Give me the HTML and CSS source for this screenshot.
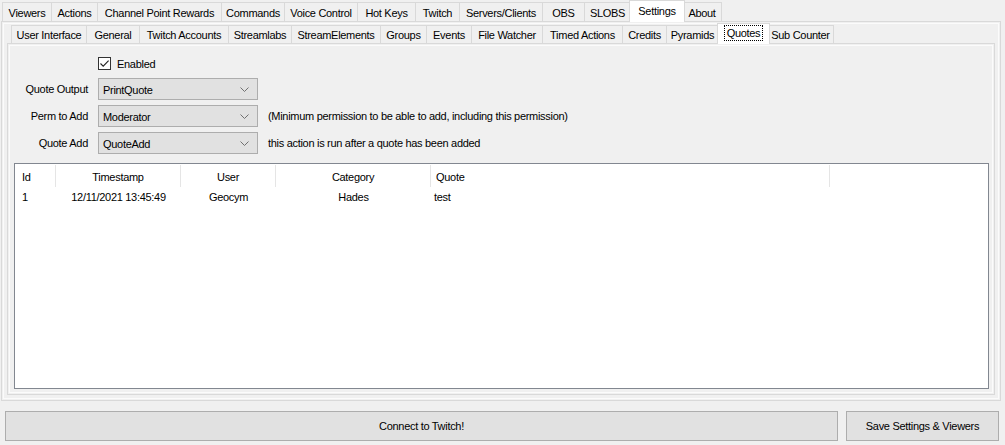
FILE: index.html
```html
<!DOCTYPE html>
<html>
<head>
<meta charset="utf-8">
<link rel="stylesheet" href="styles.css">
</head>
<body>
<div class="window">
  <div class="tabstrip tabstrip-main">
    <div class="tab">Viewers</div>
    <div class="tab">Actions</div>
    <div class="tab">Channel Point Rewards</div>
    <div class="tab">Commands</div>
    <div class="tab">Voice Control</div>
    <div class="tab">Hot Keys</div>
    <div class="tab">Twitch</div>
    <div class="tab">Servers/Clients</div>
    <div class="tab">OBS</div>
    <div class="tab">SLOBS</div>
    <div class="tab is-active">Settings</div>
    <div class="tab">About</div>
  </div>
  <div class="tabpanel tabpanel-main">
    <div class="tabstrip tabstrip-sub">
      <div class="tab">User Interface</div>
      <div class="tab">General</div>
      <div class="tab">Twitch Accounts</div>
      <div class="tab">Streamlabs</div>
      <div class="tab">StreamElements</div>
      <div class="tab">Groups</div>
      <div class="tab">Events</div>
      <div class="tab">File Watcher</div>
      <div class="tab">Timed Actions</div>
      <div class="tab">Credits</div>
      <div class="tab">Pyramids</div>
      <div class="tab is-active"><span class="focus">Quotes</span></div>
      <div class="tab">Sub Counter</div>
    </div>
    <div class="tabpanel tabpanel-sub">
      <div class="form">
        <span></span>
        <label class="check">
          <span class="box"><svg width="11" height="11" viewBox="0 0 11 11"><path d="M1.5 5.5 L4.2 8.2 L9.6 2.6" fill="none" stroke="#222" stroke-width="1.1"/></svg></span>
          Enabled
        </label>
        <span></span>

        <span class="lbl">Quote Output</span>
        <div class="combo"><span>PrintQuote</span><svg width="9" height="5" viewBox="0 0 9 5"><path d="M0.5 0.5 L4.5 4.5 L8.5 0.5" fill="none" stroke="#707070" stroke-width="1"/></svg></div>
        <span></span>

        <span class="lbl">Perm to Add</span>
        <div class="combo"><span>Moderator</span><svg width="9" height="5" viewBox="0 0 9 5"><path d="M0.5 0.5 L4.5 4.5 L8.5 0.5" fill="none" stroke="#707070" stroke-width="1"/></svg></div>
        <span class="note">(Minimum permission to be able to add, including this permission)</span>

        <span class="lbl">Quote Add</span>
        <div class="combo"><span>QuoteAdd</span><svg width="9" height="5" viewBox="0 0 9 5"><path d="M0.5 0.5 L4.5 4.5 L8.5 0.5" fill="none" stroke="#707070" stroke-width="1"/></svg></div>
        <span class="note">this action is run after a quote has been added</span>
      </div>

      <div class="listview">
        <div class="lv-row lv-header">
          <div class="cell left">Id</div>
          <div class="cell">Timestamp</div>
          <div class="cell">User</div>
          <div class="cell">Category</div>
          <div class="cell left">Quote</div>
          <div class="cell filler"></div>
        </div>
        <div class="lv-row lv-item">
          <div class="cell left">1</div>
          <div class="cell">12/11/2021 13:45:49</div>
          <div class="cell">Geocym</div>
          <div class="cell">Hades</div>
          <div class="cell left">test</div>
          <div class="cell filler"></div>
        </div>
      </div>
    </div>
  </div>
  <div class="actions">
    <button class="btn btn-connect">Connect to Twitch!</button>
    <button class="btn btn-save">Save Settings &amp; Viewers</button>
  </div>
</div>
</body>
</html>
```

FILE: styles.css
```css
html, body {
  margin: 0;
  padding: 0;
}
body {
  background: #f0f0f0;
  font-family: "Liberation Sans", Arial, sans-serif;
  font-size: 11px;
  letter-spacing: -0.3px;
  color: #000;
  width: 1005px;
  height: 445px;
  overflow: hidden;
}
.window {
  display: flex;
  flex-direction: column;
}

/* ---------- tab strips ---------- */
.tabstrip {
  display: grid;
  align-items: end;
  position: relative;
  z-index: 1;
}
.tabstrip-main {
  height: 21px;
  margin-left: 2px;
  grid-template-columns: 50px 46px 124px 63px 73px 58px 44px 83px 42px 46px 52px 39px;
}
.tabstrip-sub {
  height: 21px;
  margin-left: 4px;
  grid-template-columns: 76px 53px 89px 63px 89px 46px 45px 71px 80px 44px 52px 49px 66px;
}
.tab {
  box-sizing: border-box;
  height: 19px;
  border: 1px solid #d9d9d9;
  border-left: none;
  border-bottom: none;
  background: #f0f0f0;
  display: flex;
  align-items: center;
  justify-content: center;
  white-space: nowrap;
  padding-top: 1px;
}
.tab:first-child {
  border-left: 1px solid #d9d9d9;
}
.tabstrip-sub .tab {
  height: 18px;
}
.tab.is-active {
  background: #fff;
  border-left: 1px solid #d9d9d9;
  margin: 0 -2px -1px -2px;
  height: 22px;
  padding-top: 0;
  padding-bottom: 2px;
  position: relative;
  z-index: 2;
}
.tabstrip-sub .tab.is-active {
  height: 21px;
}
.focus {
  outline: 1px dotted #000;
  outline-offset: 0;
  padding: 1px 2px 1px 2px;
}

/* ---------- tab panels ---------- */
.tabpanel {
  box-sizing: border-box;
  border: 1px solid #d9d9d9;
  box-shadow: inset 0 0 0 1px #f0f0f0, inset 0 0 0 2px #fbfbfb;
  background: #f0f0f0;
}
.tabpanel-main {
  margin-left: 1px;
  width: 1000px;
  height: 380px;
  padding: 0 5px 5px 5px;
  display: flex;
  flex-direction: column;
}
.tabpanel-sub {
  flex: 1;
  display: flex;
  flex-direction: column;
  padding: 13px 5px 5px 6px;
}

/* ---------- form ---------- */
.form {
  display: grid;
  grid-template-columns: 74px 160px auto;
  column-gap: 10px;
  row-gap: 5px;
  align-items: center;
}
.check {
  display: flex;
  align-items: center;
  gap: 6px;
  height: 13px;
  margin-bottom: 3px;
}
.box {
  box-sizing: border-box;
  width: 13px;
  height: 13px;
  border: 1px solid #333;
  background: #fff;
  display: flex;
  align-items: center;
  justify-content: center;
}
.lbl {
  text-align: right;
}
.combo {
  box-sizing: border-box;
  height: 22px;
  border: 1px solid #adadad;
  background: #e1e1e1;
  display: flex;
  align-items: center;
  justify-content: space-between;
  padding: 1px 8px 0 4px;
}

/* ---------- list view ---------- */
.listview {
  flex: 1;
  margin-top: 9px;
  border: 1px solid #828790;
  background: #fff;
}
.lv-row {
  display: grid;
  grid-template-columns: 41px 125px 95px 155px 399px 1fr;
}
.lv-header {
  height: 23px;
  padding-top: 1px;
  box-sizing: border-box;
}
.lv-header .cell {
  border-right: 1px solid #e5e5e5;
  padding-top: 1px;
}
.lv-header .cell.filler {
  border-right: none;
}
.cell {
  box-sizing: border-box;
  display: flex;
  align-items: center;
  justify-content: center;
  white-space: nowrap;
}
.cell.left {
  justify-content: flex-start;
  padding-left: 7px;
}
.lv-header .cell.left:nth-child(5) {
  padding-left: 5px;
}
.lv-item {
  height: 19px;
  padding-top: 1px;
  box-sizing: border-box;
}
.lv-item .cell.left:nth-child(5) {
  padding-left: 3px;
}

/* ---------- buttons ---------- */
.actions {
  display: flex;
  gap: 8px;
  padding: 10px 6px 0 5px;
}
.btn {
  box-sizing: border-box;
  height: 30px;
  border: 1px solid #adadad;
  background: #e1e1e1;
  font-family: inherit;
  font-size: inherit;
  letter-spacing: inherit;
  color: #000;
  padding: 0;
}
.btn-connect {
  flex: 1;
}
.btn-save {
  width: 153px;
}
```
